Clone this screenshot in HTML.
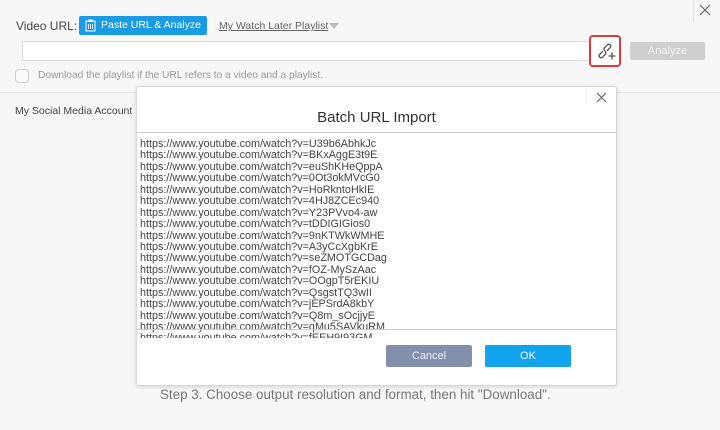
<!DOCTYPE html>
<html><head><style>
*{margin:0;padding:0;box-sizing:border-box}
body{width:720px;height:430px;background:#f7f7f7;font-family:"Liberation Sans",sans-serif;position:relative;overflow:hidden}
.a{position:absolute}
.list div{height:11.45px;line-height:11.45px;font-size:10.8px;color:#444;white-space:nowrap}
</style></head><body>
<div class="a" style="left:693px;top:0;width:1px;height:22px;background:#e4e4e4"></div>
<svg class="a" style="left:699px;top:4px" width="12" height="12"><path d="M1 1L11 11M11 1L1 11" stroke="#666" stroke-width="1.2"/></svg>
<div class="a" style="left:16px;top:19px;font-size:12px;color:#444;white-space:nowrap">Video URL:</div>
<div class="a" style="left:79px;top:16px;width:128px;height:19px;background:#1a9be6;border-radius:2px;color:#fff;font-size:10.5px;line-height:19px;padding-left:22px;white-space:nowrap;overflow:hidden">Paste URL &amp; Analyze</div>
<svg class="a" style="left:85px;top:19px" width="11" height="13"><rect x="1" y="2" width="9" height="10" fill="none" stroke="#fff"/><rect x="3.5" y="0.5" width="4" height="2.5" fill="#fff"/><path d="M3.5 5v5M5.5 5v5M7.5 5v5" stroke="#fff" stroke-width=".8"/></svg>
<div class="a" style="left:219px;top:20px;font-size:10.5px;color:#666;text-decoration:underline;white-space:nowrap">My Watch Later Playlist</div>
<div class="a" style="left:329px;top:23px;border-left:5px solid transparent;border-right:5px solid transparent;border-top:6px solid #bbb"></div>
<div class="a" style="left:22px;top:41px;width:568px;height:20px;background:#fff;border:1px solid #ddd"></div>
<div class="a" style="left:589px;top:35px;width:32px;height:32px;border:2px solid #e0393e;border-radius:4px;background:#fff"></div>
<svg class="a" style="left:596px;top:42px" width="20" height="18"><g fill="none" stroke="#555" stroke-width="1.3" stroke-linecap="round"><path d="M6.5 9.5l-3 3a2 2 0 002.8 2.8l3-3a2 2 0 000-2.8"/><path d="M8.5 8.5a2 2 0 010-2.8l3-3a2 2 0 012.8 2.8l-3 3"/><path d="M13 14h6M16 11v6"/></g></svg>
<div class="a" style="left:630px;top:42px;width:75px;height:18px;background:#cfcfcf;border-radius:2px;color:#f4f4f4;font-size:11px;line-height:18px;text-align:center">Analyze</div>
<div class="a" style="left:15px;top:69px;width:14px;height:14px;border:1px solid #ccc;border-radius:4px;background:#fafafa"></div>
<div class="a" style="left:38px;top:70px;font-size:10.2px;color:#999;white-space:nowrap">Download the playlist if the URL refers to a video and a playlist.</div>
<div class="a" style="left:0;top:92px;width:720px;height:1px;background:#e6e6e6"></div>
<div class="a" style="left:15px;top:105px;font-size:10.5px;color:#444;white-space:nowrap">My Social Media Account</div>
<div class="a" style="left:160px;top:387px;font-size:13.4px;color:#777;white-space:nowrap">Step 3. Choose output resolution and format, then hit "Download".</div>

<div class="a" style="left:136px;top:86px;width:481px;height:300px;background:#fff;border:1px solid #d8d8d8;border-radius:3px;box-shadow:0 1px 4px rgba(0,0,0,.15)"></div>
<div class="a" style="left:586px;top:87px;width:1px;height:18px;background:#eee"></div>
<svg class="a" style="left:596px;top:92px" width="11" height="11"><path d="M1 1L10 10M10 1L1 10" stroke="#666" stroke-width="1.2"/></svg>
<div class="a" style="left:137px;top:109px;width:479px;text-align:center;font-size:15px;color:#333">Batch URL Import</div>
<div class="a" style="left:137px;top:132px;width:479px;height:1px;background:#ccc"></div>
<div class="a list" style="left:140px;top:139px;height:199px;overflow:hidden">
<div>https://www.youtube.com/watch?v=U39b6AbhkJc</div>
<div>https://www.youtube.com/watch?v=BKxAggE3t9E</div>
<div>https://www.youtube.com/watch?v=euShKHeQppA</div>
<div>https://www.youtube.com/watch?v=0Ot3okMVcG0</div>
<div>https://www.youtube.com/watch?v=HoRkntoHkIE</div>
<div>https://www.youtube.com/watch?v=4HJ8ZCEc940</div>
<div>https://www.youtube.com/watch?v=Y23PVvo4-aw</div>
<div>https://www.youtube.com/watch?v=tDDIGIGios0</div>
<div>https://www.youtube.com/watch?v=9nKTWkWMHE</div>
<div>https://www.youtube.com/watch?v=A3yCcXgbKrE</div>
<div>https://www.youtube.com/watch?v=seZMOTGCDag</div>
<div>https://www.youtube.com/watch?v=fOZ-MySzAac</div>
<div>https://www.youtube.com/watch?v=OOgpT5rEKIU</div>
<div>https://www.youtube.com/watch?v=QsgstTQ3wII</div>
<div>https://www.youtube.com/watch?v=jEPSrdA8kbY</div>
<div>https://www.youtube.com/watch?v=Q8m_sOcjjyE</div>
<div>https://www.youtube.com/watch?v=qMu5SAVkuRM</div>
<div>https://www.youtube.com/watch?v=fEEH9I93GM</div>
</div>
<div class="a" style="left:137px;top:329px;width:479px;height:1px;background:#ccc"></div>
<div class="a" style="left:386px;top:345px;width:86px;height:22px;background:#8390ab;border-radius:2px;color:#eef;font-size:11px;line-height:22px;text-align:center">Cancel</div>
<div class="a" style="left:485px;top:345px;width:86px;height:22px;background:#12a3ef;border-radius:2px;color:#fff;font-size:11px;line-height:22px;text-align:center">OK</div>
</body></html>
